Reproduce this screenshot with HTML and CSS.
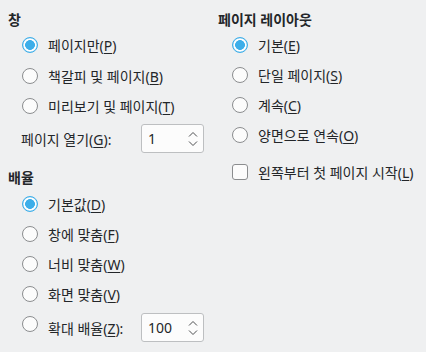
FILE: index.html
```html
<!DOCTYPE html>
<html lang="ko">
<head>
<meta charset="utf-8">
<link rel="stylesheet" href="styles.css">
</head>
<body>
<div class="page">
  <div class="col">
    <section class="group">
      <div class="title">창</div>
      <div class="opts">
        <label class="opt tall"><span class="radio on"></span><span>페이지만(<u>P</u>)</span></label>
        <label class="opt tall"><span class="radio"></span><span>책갈피 및 페이지(<u>B</u>)</span></label>
        <label class="opt tall"><span class="radio"></span><span>미리보기 및 페이지(<u>T</u>)</span></label>
        <div class="spinrow">
          <span class="spinlabel">페이지 열기(<u>G</u>):</span>
          <div class="spin"><span class="val">1</span>
            <svg class="chev" width="10" height="16" viewBox="0 0 10 16"><path d="M1 5.5 L5 1.5 L9 5.5 M1 10.5 L5 14.5 L9 10.5" fill="none" stroke="#4d4f51" stroke-width="1"/></svg>
          </div>
        </div>
      </div>
    </section>
    <section class="group g2">
      <div class="title">배율</div>
      <div class="opts pad">
        <label class="opt mid"><span class="radio on"></span><span>기본값(<u>D</u>)</span></label>
        <label class="opt mid"><span class="radio"></span><span>창에 맞춤(<u>F</u>)</span></label>
        <label class="opt mid"><span class="radio"></span><span>너비 맞춤(<u>W</u>)</span></label>
        <label class="opt mid"><span class="radio"></span><span>화면 맞춤(<u>V</u>)</span></label>
        <div class="zoomrow">
          <label class="opt zoomopt"><span class="radio up"></span><span>확대 배율(<u>Z</u>):</span></label>
          <div class="spin"><span class="val">100</span>
            <svg class="chev" width="10" height="16" viewBox="0 0 10 16"><path d="M1 5.5 L5 1.5 L9 5.5 M1 10.5 L5 14.5 L9 10.5" fill="none" stroke="#4d4f51" stroke-width="1"/></svg>
          </div>
        </div>
      </div>
    </section>
  </div>
  <div class="col">
    <section class="group">
      <div class="title">페이지 레이아웃</div>
      <div class="opts">
        <label class="opt"><span class="radio on"></span><span>기본(<u>E</u>)</span></label>
        <label class="opt"><span class="radio"></span><span>단일 페이지(<u>S</u>)</span></label>
        <label class="opt"><span class="radio"></span><span>계속(<u>C</u>)</span></label>
        <label class="opt"><span class="radio"></span><span>양면으로 연속(<u>O</u>)</span></label>
        <label class="opt check"><span class="box"></span><span>왼쪽부터 첫 페이지 시작(<u>L</u>)</span></label>
      </div>
    </section>
  </div>
</div>
</body>
</html>
```
FILE: styles.css
```css
html, body {
  margin: 0;
  padding: 0;
}
body {
  background: #eff0f1;
  color: #232629;
  font-family: "Noto Sans", "Noto Sans CJK KR", sans-serif;
  font-size: 14px;
  width: 426px;
  height: 352px;
  overflow: hidden;
}
.page {
  display: grid;
  grid-template-columns: 210px 1fr;
  padding: 9px 0 0 8px;
}
.title {
  height: 21px;
  line-height: 21px;
  font-weight: 700;
}
.opts {
  display: flex;
  flex-direction: column;
  padding-left: 14px;
}
.opts.pad {
  padding-top: 2px;
}
.opt {
  display: flex;
  align-items: center;
  gap: 10px;
  height: 30px;
  white-space: nowrap;
}
.opt.tall { height: 30.5px; }
.opt.mid { height: 29.75px; }
.opt.check { margin-top: 7px; }
u {
  text-decoration-thickness: 1px;
  text-underline-offset: 2px;
}
.radio {
  flex: none;
  width: 16px;
  height: 16px;
  box-sizing: border-box;
  border-radius: 50%;
  border: 1px solid #8b8d8f;
  background: #fcfcfc;
}
.radio.on {
  border-color: #3daee9;
  background: radial-gradient(circle, #3daee9 0 4.6px, #ffffff 5.2px 6.2px, #a9d9f4 6.8px);
}
.radio.up {
  margin-bottom: 7px;
}
.box {
  flex: none;
  width: 16px;
  height: 16px;
  box-sizing: border-box;
  border-radius: 3px;
  border: 1px solid #8b8d8f;
  background: #fcfcfc;
}
.spinrow {
  display: flex;
  align-items: center;
  height: 34px;
  margin-left: -1px;
}
.spinlabel {
  width: 120px;
  flex: none;
}
.spin {
  flex: none;
  width: 63px;
  height: 29px;
  box-sizing: border-box;
  border: 1px solid #bdbfc1;
  border-radius: 3px;
  background: #fcfcfc;
  display: flex;
  align-items: center;
  justify-content: space-between;
  padding: 0 5px 0 6px;
}
.chev {
  display: block;
}
.g2 {
  margin-top: 11px;
}
.zoomrow {
  display: flex;
  align-items: center;
  height: 38px;
}
.zoomopt {
  width: 119px;
  height: 38px;
  flex: none;
}
```
